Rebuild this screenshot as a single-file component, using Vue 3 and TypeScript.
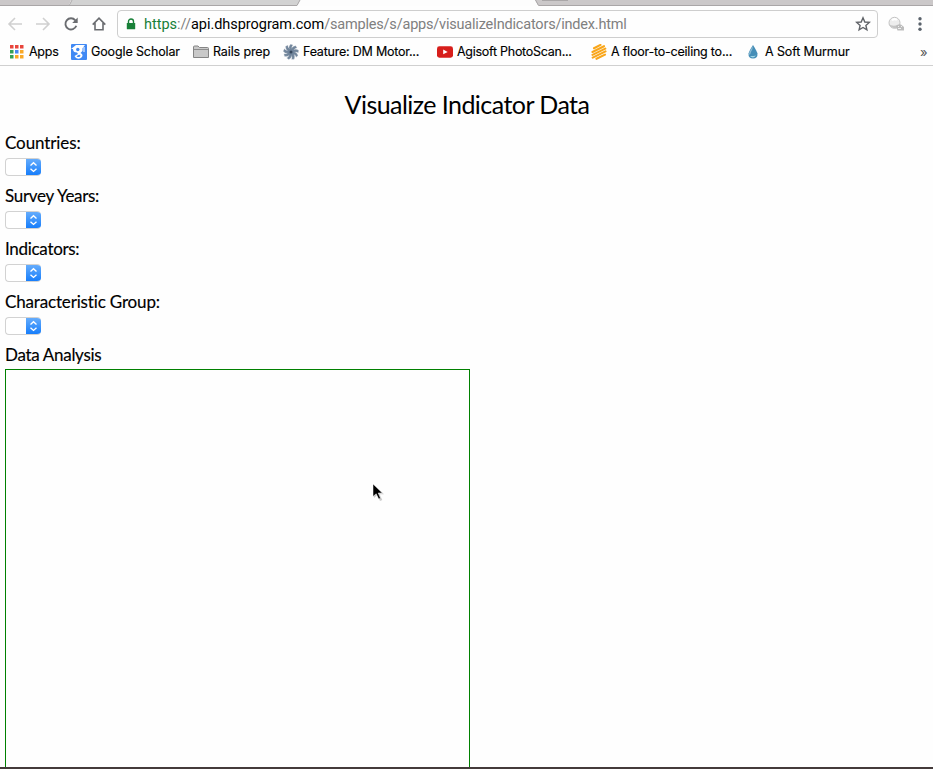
<script setup lang="ts">
type Icon = 'apps' | 'scholar' | 'folder' | 'gear' | 'video' | 'stripes' | 'drop'

interface Bookmark {
  id: Icon
  label: string
}

const bookmarks: Bookmark[] = [
  { id: 'apps', label: 'Apps' },
  { id: 'scholar', label: 'Google Scholar' },
  { id: 'folder', label: 'Rails prep' },
  { id: 'gear', label: 'Feature: DM Motor...' },
  { id: 'video', label: 'Agisoft PhotoScan...' },
  { id: 'stripes', label: 'A floor-to-ceiling to...' },
  { id: 'drop', label: 'A Soft Murmur' },
]

const fields: { id: string; label: string }[] = [
  { id: 'countries', label: 'Countries:' },
  { id: 'years', label: 'Survey Years:' },
  { id: 'indicators', label: 'Indicators:' },
  { id: 'group', label: 'Characteristic Group:' },
]

const appColors: string[] = [
  '#e8453c', '#e8453c', '#e8453c',
  '#34a056', '#4688f1', '#f9a825',
  '#34a056', '#f9a825', '#f9a825',
]
const blades: number[] = [0, 40, 80, 120, 160, 200, 240, 280, 320]
</script>

<template>
  <div class="window">
    <header class="chrome">
      <svg class="tabs" width="933" height="6" viewBox="0 0 933 6">
        <rect width="933" height="6" fill="#fdfdfd" />
        <path d="M0 0H71L69 5H0Z" fill="#cbc8c9" />
        <path d="M72 0H300L297.5 5H70Z" fill="#d2d2d2" />
        <path d="M535 0H933V5H538Z" fill="#cbc8c9" />
        <path d="M0 5.5H297L300 0M72 0L69.500 5M535.500 0L538.500 5.500H933" fill="none" stroke="#a9a6a7" />
        <rect x="542" width="26" height="1" fill="#aaa7a8" />
      </svg>

      <div class="toolbar">
        <svg class="nav" width="117" height="28" viewBox="0 0 117 28" fill="none" stroke-width="1.6">
          <g stroke="#d0d0d0">
            <path d="M22 14H9M15 8L9 14L15 20" />
            <path d="M36 14H49M43 8L49 14L43 20" />
          </g>
          <g stroke="#6a6c70" stroke-width="1.9">
            <path d="M75.300 10.300A5.600 5.600 0 1 0 76.300 15.800" />
            <path d="M77.700 7.500V13H72.200Z" fill="#6a6c70" stroke="none" />
            <path d="M92.700 14.600L99 8.200L105.300 14.600M95 13V19.700H103V13" stroke-width="1.6" />
          </g>
        </svg>
        <div class="address">
          <svg class="lock" width="10" height="12" viewBox="0 0 10 12">
            <path d="M2.500 6V3.500a2.500 2.500 0 0 1 5 0V6" fill="none" stroke="#188038" stroke-width="1.400" />
            <rect x=".8" y="5" width="8.400" height="6.300" rx=".6" fill="#188038" />
          </svg>
          <span class="url"><span class="secure">https</span><span>://</span><span class="host">api.dhsprogram.com</span><span class="path">/samples/s/apps/visualizeIndicators/index.html</span></span>
          <svg class="star" width="16" height="16" viewBox="0 0 16 16">
            <path d="M8 1.800L9.800 6L14.300 6.400L10.900 9.400L11.900 13.800L8 11.500L4.100 13.800L5.100 9.400L1.700 6.400L6.200 6Z" fill="none" stroke="#606368" stroke-width="1.400" />
          </svg>
        </div>
        <svg class="extras" width="55" height="28" viewBox="0 0 55 28">
          <circle cx="16.500" cy="12.800" r="5.500" fill="#ededed" stroke="#c4c4c4" />
          <path d="M11 14Q14 19 19 18.200L20 15Q14 17 11 14Z" fill="#c5c5c5" />
          <path d="M14 10.500Q16 8 19 10" fill="none" stroke="#fff" stroke-width="2" />
          <path d="M18 16Q20 13.500 23 14.500L26 17V20.500H19.500Z" fill="#bdbdbd" />
          <path d="M20 16.500h1m2 0h1m-4 2h3" stroke="#f1f1f1" />
          <g fill="#5a626b">
            <circle cx="42" cy="8.800" r="1.700" />
            <circle cx="42" cy="14" r="1.700" />
            <circle cx="42" cy="19.200" r="1.700" />
          </g>
        </svg>
      </div>

      <nav class="bookmarks">
        <a v-for="mark in bookmarks" :key="mark.id" class="bookmark" :class="mark.id">
          <svg class="icon" width="16" height="16" viewBox="0 0 16 16">
            <g v-if="mark.id === 'apps'">
              <rect v-for="(color, i) in appColors" :key="i" :x="1 + (i % 3) * 5" :y="1 + Math.floor(i / 3) * 5" width="3.500" height="3.500" :fill="color" />
            </g>
            <g v-else-if="mark.id === 'scholar'">
              <rect width="16" height="16" rx="1" fill="#4089f4" />
              <path d="M0 5L5 1H14L11.500 4.200V7L9.500 9Q12.500 10.500 11 13Q8.500 16 5 14L3.500 12L7 10L6 8.500Q2 8.500 2 5Z" fill="#fff" />
              <circle cx="6.800" cy="5.500" r="1.700" fill="#4089f4" />
              <path d="M5.500 12.500Q8 9.500 9.500 11.500Q9 14 5.500 12.500" fill="#4089f4" />
              <path d="M13 3V8" stroke="#fff" />
            </g>
            <g v-else-if="mark.id === 'folder'">
              <path d="M.5 13.500V3Q.5 2 1.500 2H5L6.500 3.500H14.500Q15.500 3.500 15.500 4.500V13.500Z" fill="#c9c9c9" stroke="#858585" />
              <path d="M1 5.500H15" stroke="#8d8d8d" />
            </g>
            <g v-else-if="mark.id === 'gear'">
              <path v-for="angle in blades" :key="angle" d="M6.500 6Q5 3 7.500 .2L10 1Q7.800 2.500 9.500 6Z" fill="#71859b" stroke="#c3cbd4" stroke-width=".3" :transform="`rotate(${angle} 8 8)`" />
              <circle cx="8" cy="8" r="3.500" fill="#70849b" />
              <circle cx="8" cy="8" r="1.500" fill="#35475c" />
            </g>
            <g v-else-if="mark.id === 'video'">
              <rect y="2.300" width="16" height="11.400" rx="2.400" fill="#d71e1b" />
              <path d="M6.200 5.500V10.300L10.700 7.900Z" fill="#fff" />
            </g>
            <path v-else-if="mark.id === 'stripes'" d="M3 4.200L9.500 .9M1.500 8L13 2.200M1.500 10.900L14.300 4.600M1.700 13.600L14.500 7.400M5.500 14.800L14 10.600" fill="none" stroke="#f9a61a" stroke-width="2.100" stroke-linecap="round" />
            <g v-else>
              <path d="M8 1Q4 7.300 3.500 9.500Q3.200 14.500 8 14.500Q12.800 14.500 12.500 9.500Q12 7.300 8 1Z" fill="#458eb7" />
              <path d="M8 2Q4 8 4 10Q5 12 6 8Q8 5 8 2Z" fill="#8bbad3" />
              <path d="M5 12Q8 15 11 11.500Q9 12 5 12Z" fill="#9fd5e5" />
            </g>
          </svg>
          <span class="mark-label">{{ mark.label }}</span>
        </a>
        <span class="more">»</span>
      </nav>
    </header>

    <main class="content">
      <h1><span>Visualize Indicator Data</span></h1>
      <section v-for="field in fields" :key="field.id" class="field">
        <label :class="field.id">{{ field.label }}</label>
        <button class="select" type="button" :aria-label="field.label">
          <svg width="15" height="18" viewBox="0 0 15 18">
            <path d="M4.500 7.500L7.500 4.800L10.500 7.500M4.500 10.700L7.500 13.400L10.500 10.700" fill="none" stroke="#fff" stroke-width="1.400" />
          </svg>
        </button>
      </section>
      <h2>Data Analysis</h2>
      <div class="chart"></div>
    </main>
    <footer class="edge"></footer>
    <svg class="cursor" width="14" height="20" viewBox="0 0 14 20">
      <path d="M2 2V15L5.200 12L8 18L10.300 17L7.600 11.200H12Z" fill="#ccc" />
      <path d="M1 1V13.500L4.200 10.800L6.700 16L8.500 15.200L6.200 10H10.300Z" fill="#000" stroke="#fff" stroke-width=".5" />
    </svg>
  </div>
</template>

<style>
body { margin: 0; overflow: hidden; }
</style>

<style scoped>
.window { position: relative; display: flex; flex-direction: column; width: 933px; height: 769px; overflow: hidden; background: #fefefe; color: #000; }
.chrome { display: flex; flex: none; flex-direction: column; box-sizing: border-box; height: 66px; border-bottom: 1px solid #d0d0d0; font-family: Roboto, sans-serif; background: #fefefe; }
.tabs { display: block; flex: none; }
.toolbar { display: flex; height: 28px; margin-top: 4px; }
.nav, .extras { flex: none; }
.address { display: flex; align-items: center; box-sizing: border-box; width: 761px; height: 28px; padding: 0 6px 0 8px; border: 1px solid #cecece; border-radius: 4px; }
.lock { margin-right: 8px; }
.url { flex: 1; padding-top: 2px; white-space: nowrap; font-size: 14.500px; line-height: 20px; color: #808080; }
.secure { color: #188038; }
.host { color: #000; letter-spacing: -.04px; }
.path { letter-spacing: -.2px; }
.bookmarks { display: flex; align-items: center; height: 27px; padding-left: 9px; font-family: Inter, sans-serif; font-size: 12.500px; }
.bookmark { display: flex; flex: none; align-items: center; gap: 4px; white-space: nowrap; letter-spacing: -.12px; }
.mark-label { -webkit-text-stroke: .15px #000; }
.apps { width: 62px; letter-spacing: -.25px; }
.scholar { width: 122px; }
.folder { width: 90px; }
.gear { width: 154px; letter-spacing: -.22px; }
.video { width: 154px; letter-spacing: -.27px; }
.stripes { width: 154px; letter-spacing: -.22px; }
.drop { width: 170px; }
.more { margin-left: 5px; color: #555; font-size: 13px; }
.content { display: flex; flex: 1; flex-direction: column; min-height: 0; padding: 0 5px; font-family: Lato, sans-serif; }
h1 { margin: 21px 0 11px; font-size: 25px; line-height: 34px; font-weight: 400; text-align: center; letter-spacing: -.55px; text-indent: 1px; }
.field { display: flex; flex: none; flex-direction: column; height: 53px; }
label, h2 { flex: none; box-sizing: border-box; margin: 0; font-size: 17px; line-height: 22px; height: 24px; font-weight: 400; white-space: nowrap; letter-spacing: -.3px; -webkit-text-stroke: .15px #000; }
.countries { letter-spacing: -.1px; }
.group { letter-spacing: -.16px; }
.select { display: flex; justify-content: flex-end; align-items: center; box-sizing: border-box; width: 36px; height: 18px; margin-top: 2px; padding: 0; border: 1px solid #d2d2d2; border-right: 0; border-radius: 4px; background: #fff; overflow: hidden; }
.select svg { flex: none; background: linear-gradient(#6aaffc, #127bfb); }
.chart { flex: 1; box-sizing: border-box; width: 465px; margin-top: 1px; border: 1px solid #008000; border-bottom: 0; }
.edge { flex: none; height: 2px; background: #443a3a; }
.cursor { position: absolute; left: 372px; top: 483px; }
</style>
